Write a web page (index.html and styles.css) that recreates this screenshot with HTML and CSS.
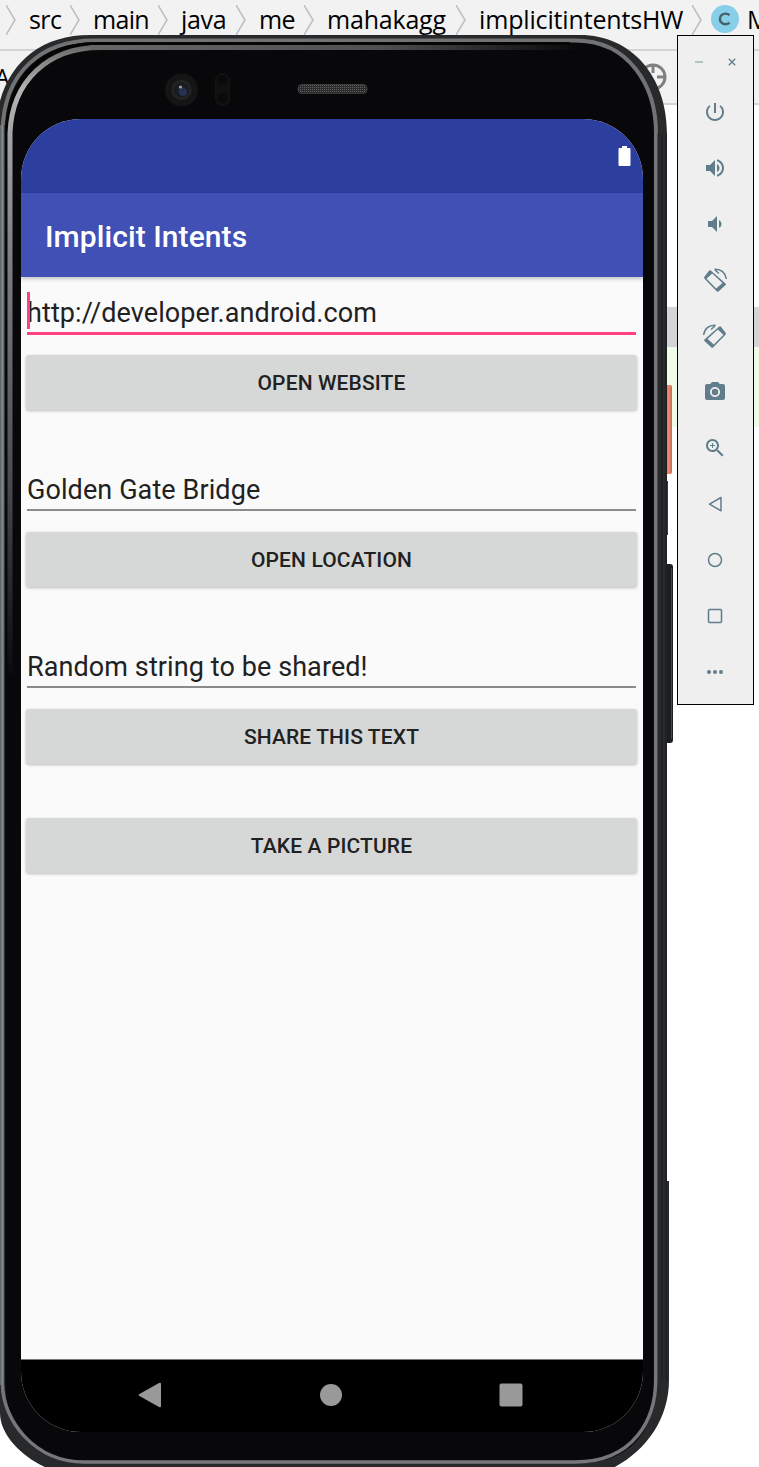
FILE: index.html
```html
<!DOCTYPE html>
<html lang="en">
<head>
<meta charset="utf-8">
<title>Implicit Intents</title>
<link rel="stylesheet" href="styles.css">
</head>
<body>
<div class="ide">
  <nav class="crumbs">
    <svg class="sep" viewBox="0 0 10 30"><path d="M0 0L9 15L0 30"/></svg><span class="crumb src">src</span>
    <svg class="sep" viewBox="0 0 10 30"><path d="M0 0L9 15L0 30"/></svg><span class="crumb main">main</span>
    <svg class="sep" viewBox="0 0 10 30"><path d="M0 0L9 15L0 30"/></svg><span class="crumb java">java</span>
    <svg class="sep" viewBox="0 0 10 30"><path d="M0 0L9 15L0 30"/></svg><span class="crumb me">me</span>
    <svg class="sep" viewBox="0 0 10 30"><path d="M0 0L9 15L0 30"/></svg><span class="crumb maha">mahakagg</span>
    <svg class="sep" viewBox="0 0 10 30"><path d="M0 0L9 15L0 30"/></svg><span class="crumb impl">implicitintentsHW</span>
    <svg class="sep" viewBox="0 0 10 30"><path d="M0 0L9 15L0 30"/></svg><span class="class-badge"><svg viewBox="0 0 28 28"><path d="M18.500 10.200A5.600 5.300 0 1 0 18.500 17.600"/></svg></span><span class="crumb">M</span>
  </nav>
  <div class="tools"><span class="tab">A</span>
    <svg class="target" viewBox="0 0 28 28"><circle cx="14" cy="14" r="12"/><path d="M14 1v9M14 18v9M1 14h9M18 14h9"/></svg>
  </div>
  <div class="editor"><div class="row-gray"></div><div class="row-green"></div></div>
</div>

<div class="phone">
  <svg class="frame" viewBox="0 0 676 1432">
    <defs>
      <linearGradient id="edgeLeft" x1="0" x2="1" y1="0" y2="0"><stop offset="0" stop-color="#5b6063"/><stop offset=".5" stop-color="#85898c"/><stop offset=".8" stop-color="#5b6063"/><stop offset="1" stop-color="#111"/></linearGradient>
      <linearGradient id="shineLeft" gradientUnits="userSpaceOnUse" x1="0" x2="0" y1="10" y2="640"><stop offset="0" stop-color="#686868"/><stop offset=".07" stop-color="#b4b4b4"/><stop offset=".3" stop-color="#858585"/><stop offset=".7" stop-color="#4a4a4a"/><stop offset="1" stop-color="#0b0a0b"/></linearGradient>
      <linearGradient id="shineTop" gradientUnits="userSpaceOnUse" x1="80" x2="580" y1="0" y2="0"><stop offset="0" stop-color="#686868"/><stop offset=".6" stop-color="#505050"/><stop offset="1" stop-color="#08080a"/></linearGradient>
      <linearGradient id="key" x1="0" x2="1" y1="0" y2="0"><stop offset="0" stop-color="#c85d46"/><stop offset=".5" stop-color="#f08a70"/><stop offset="1" stop-color="#c96852"/></linearGradient>
      <pattern id="mesh" width="2" height="2" patternUnits="userSpaceOnUse"><rect width="2" height="2" fill="#2b2b2b"/><rect width="1" height="1" fill="#606060"/></pattern>
      <radialGradient id="lens"><stop offset="0" stop-color="#20283e"/><stop offset=".6" stop-color="#17191f"/><stop offset="1" stop-color="#292929"/></radialGradient>
    </defs>
    <rect x="665" y="350" width="7" height="89" rx="2" fill="url(#key)"/>
    <rect x="665" y="446" width="3" height="54" fill="#3a3a3a"/>
    <rect x="664" y="529" width="9" height="179" rx="3" fill="#1d1e1e"/>
    <path d="M671.500 533V704" stroke="#484848"/>
    <path d="M0 66C12 24 44 0 90 0H580C632 0 667 42 667 98V1146H669V1345C669 1384 646 1416 613 1433H47C22 1422 0 1400 0 1378Z" fill="#27292a"/>
    <path d="M5 94C7 34 48 5 100 5H575C632 5 656 48 656 98V1345C656 1396 630 1428 580 1428H84C35 1428 5 1395 5 1345Z" fill="#08080a"/>
    <path d="M2.500 98C3 35 44 5.500 94 5.500H575C630 5.500 656 52 656 98" fill="none" stroke="#717274" stroke-width="4"/>
    <path d="M7 100C9 38 48 8.500 96 8.500H570" fill="none" stroke="#050505" stroke-width="3"/>
    <rect x="0" y="90" width="5" height="1260" fill="url(#edgeLeft)"/>
    <path d="M10 640V98C12 46 48 12.500 100 12.500" fill="none" stroke="url(#shineLeft)" stroke-width="5"/>
    <rect x="90" y="10" width="490" height="5" fill="url(#shineTop)"/>
    <path d="M655.700 98V1345C655.700 1384 634 1427 575 1427H84C34 1427 3 1385 2.500 1350" fill="none" stroke="#777678" stroke-width="3.500"/>
    <path d="M662 100V1345M666 100V1345" stroke="#1b1c1d"/>
    <circle cx="181.500" cy="55" r="16.500" fill="#151515"/><circle cx="181.500" cy="55" r="10" fill="url(#lens)"/><circle cx="183" cy="57" r="4" fill="#26304f"/><circle cx="180.500" cy="52" r="1.600" fill="#9c9c9c"/>
    <rect x="215.500" y="38.500" width="14" height="32" rx="7" fill="#101011" stroke="#151516"/><circle cx="222.500" cy="45" r="5" fill="#0a0a0b"/><circle cx="222.500" cy="63" r="5" fill="#0a0a0b"/>
    <rect x="298" y="49.500" width="69" height="9" rx="4" fill="url(#mesh)" stroke="#3a3a3a"/>
  </svg>
  <main class="screen">
    <header class="status"><svg class="battery" viewBox="0 0 12 20"><path d="M1 2H3.500V0H8.500V2H11Q12 2 12 3V19Q12 20 11 20H1Q0 20 0 19V3Q0 2 1 2Z"/></svg></header>
    <h1 class="appbar">Implicit Intents</h1>
    <section class="content">
      <div class="field active"><i class="caret"></i>http://developer.android.com</div>
      <button class="btn">OPEN WEBSITE</button>
      <div class="field">Golden Gate Bridge</div>
      <button class="btn">OPEN LOCATION</button>
      <div class="field">Random string to be shared!</div>
      <button class="btn">SHARE THIS TEXT</button>
      <button class="btn solo">TAKE A PICTURE</button>
    </section>
    <footer class="navbar">
      <svg viewBox="0 0 24 26"><path d="M1 12.200L21 1Q23 0 23 2V24Q23 26 21 25L1 13.800Q0 13 1 12.200Z"/></svg>
      <svg viewBox="0 0 24 26"><circle cx="12" cy="13" r="11"/></svg>
      <svg viewBox="0 0 24 26"><rect x=".500" y="1.500" width="23" height="23" rx="2"/></svg>
    </footer>
  </main>
</div>

<aside class="controls">
  <div class="window-btns">
    <svg viewBox="0 0 8 8"><path d="M0 4H8" stroke="#9fb0b8" stroke-width="1.500"/></svg>
    <svg viewBox="0 0 8 8"><path d="M.800.800L7.200 7.200M7.200.800L.800 7.200" stroke="#607d8b" stroke-width="1.300"/></svg>
  </div>
  <svg class="ico" viewBox="0 0 24 24"><path d="M13 3h-2v10h2V3zm4.830 2.170l-1.420 1.420C17.990 7.860 19 9.810 19 12c0 3.870-3.130 7-7 7s-7-3.130-7-7c0-2.190 1.010-4.140 2.580-5.420L6.170 5.170C4.230 6.820 3 9.260 3 12c0 4.970 4.030 9 9 9s9-4.030 9-9c0-2.740-1.230-5.180-3.170-6.830z"/></svg>
  <svg class="ico" viewBox="0 0 24 24"><path d="M3 9v6h4l5 5V4L7 9H3zm13.500 3c0-1.770-1.020-3.290-2.500-4.030v8.050c1.480-.730 2.500-2.250 2.500-4.020zM14 3.230v2.060c2.890.860 5 3.540 5 6.710s-2.110 5.850-5 6.710v2.060c4.010-.910 7-4.490 7-8.770s-2.990-7.860-7-8.770z"/></svg>
  <svg class="ico" viewBox="0 0 24 24"><path d="M18.500 12c0-1.770-1.020-3.290-2.500-4.030v8.050c1.480-.730 2.500-2.250 2.500-4.020zM5 9v6h4l5 5V4L9 9H5z"/></svg>
  <svg class="ico" viewBox="-12 -12 24 24"><path fill-rule="evenodd" d="M-5.800-9.500Q-5-10.200-4.200-9.500L10.600 3.400Q11.200 4.200 10.600 5L3.500 11.500Q2.700 12.200 1.900 11.500L-10.700-1.500Q-11.300-2.400-10.600-3.200ZM-2.800-6.500L-8.400-1.300L1.200 8.600L7.400 3Z"/><path class="line" d="M-.500-10.800C6-11.300 10.600-7 11.400-1M0-10L4-6.500"/></svg>
  <svg class="ico" viewBox="-12 -12 24 24"><g transform="scale(-1 1)"><path fill-rule="evenodd" d="M-5.800-9.500Q-5-10.200-4.200-9.500L10.600 3.400Q11.200 4.200 10.600 5L3.500 11.500Q2.700 12.200 1.900 11.500L-10.700-1.500Q-11.300-2.400-10.600-3.200ZM-2.800-6.500L-8.400-1.300L1.200 8.600L7.400 3Z"/><path class="line" d="M-.500-10.800C6-11.300 10.600-7 11.400-1M0-10L4-6.500"/></g></svg>
  <svg class="ico" viewBox="0 0 24 24"><circle cx="12" cy="12" r="3.200"/><path d="M9 2L7.170 4H4c-1.100 0-2 .9-2 2v12c0 1.100.9 2 2 2h16c1.100 0 2-.9 2-2V6c0-1.100-.9-2-2-2h-3.170L15 2H9zm3 15c-2.760 0-5-2.240-5-5s2.240-5 5-5 5 2.240 5 5-2.240 5-5 5z"/></svg>
  <svg class="ico" viewBox="0 0 24 24"><path d="M15.500 14h-.79l-.28-.27C15.410 12.590 16 11.110 16 9.500 16 5.910 13.090 3 9.500 3S3 5.910 3 9.500 5.910 16 9.500 16c1.610 0 3.090-.59 4.230-1.570l.27.28v.79l5 4.990L20.490 19l-4.990-5zm-6 0C7.010 14 5 11.990 5 9.500S7.010 5 9.500 5 14 7.010 14 9.500 11.990 14 9.500 14zM12 10h-2v2H9v-2H7V9h2V7h1v2h2v1z"/></svg>
  <svg class="ico" viewBox="0 0 24 24"><path class="line" d="M18 5.500V18.800L6.500 12.100Z"/></svg>
  <svg class="ico" viewBox="0 0 24 24"><circle class="line" cx="12" cy="12" r="6.500"/></svg>
  <svg class="ico" viewBox="0 0 24 24"><rect class="line" x="5.500" y="5.500" width="13" height="13" rx="1"/></svg>
  <svg class="ico" viewBox="0 0 24 24"><circle cx="6" cy="12" r="2"/><circle cx="12" cy="12" r="2"/><circle cx="18" cy="12" r="2"/></svg>
</aside>
</body>
</html>
```
FILE: styles.css
```css
* { box-sizing: border-box; }
body { margin: 0; position: relative; width: 759px; height: 1467px; overflow: hidden; background: #fff; }
svg { display: block; flex: none; }

.ide { font-family: "Open Sans", "Noto Sans", sans-serif; color: #000; }
.crumbs { display: flex; height: 51px; padding: 5px 0 0 6px; background: #f2f2f2; border-bottom: 2px solid #d4d4d4; overflow: hidden; }
.sep { width: 10px; height: 30px; fill: none; stroke: #b9bfc2; stroke-width: 1.500; }
.crumb { flex: none; margin-top: -1px; font-size: 25px; line-height: 30px; letter-spacing: -.15px; white-space: nowrap; }
.src { width: 54px; padding-left: 13px; letter-spacing: -.6px; }
.main { width: 78px; padding-left: 13px; letter-spacing: -.7px; }
.java { width: 68px; padding-left: 13px; letter-spacing: -.3px; }
.me { width: 58px; padding-left: 13px; letter-spacing: -.6px; }
.maha { width: 142px; padding-left: 13px; letter-spacing: -.2px; }
.impl { width: 226px; padding-left: 13px; letter-spacing: -.15px; }
.class-badge { flex: none; width: 28px; height: 28px; margin: 0 8px 0 9px; border-radius: 50%; background: #87cee8; }
.class-badge svg { fill: none; stroke: #46606b; stroke-width: 2.400; }
.tools { display: flex; justify-content: space-between; height: 54px; padding: 12px 92px 0 0; background: #f2f2f2; border-bottom: 2px solid #d4d4d4; }
.tab { margin-left: -5px; font-size: 23px; line-height: 28px; }
.target { width: 28px; height: 28px; fill: none; stroke: #808080; stroke-width: 3; }
.editor { padding-top: 202px; }
.row-gray { height: 40px; background: #d4d4d4; }
.row-green { height: 80px; background: #edfbe7; }

.phone { position: absolute; left: 0; top: 35px; width: 676px; height: 1432px; padding: 84px 0 0 21px; }
.frame { position: absolute; left: 0; top: 0; width: 676px; height: 1432px; }
.screen { position: relative; display: flex; flex-direction: column; width: 622px; height: 1313px; border-radius: 60px; overflow: hidden; background: #fafafa; font-family: Roboto, sans-serif; color: #212121; }
.status { display: flex; justify-content: flex-end; height: 74px; padding: 27px 12px 0 0; background: #2c3e9e; }
.battery { width: 13px; height: 20px; fill: #fff; }
.appbar { height: 84px; margin: 0; padding-left: 24px; background: #4050b5; color: #fff; font-size: 30px; font-weight: 500; line-height: 88px; letter-spacing: .08px; box-shadow: 0 2px 4px rgba(0,0,0,.22); }
.content { flex: 1; padding: 15px 6px 0 5px; }
.field { position: relative; height: 42px; margin: 0 1px 21px; border-bottom: 2px solid #8b8b8b; font-size: 27px; line-height: 42px; letter-spacing: .09px; white-space: nowrap; }
.active { height: 43px; margin-bottom: 20px; border-bottom: 3px solid #ff4081; }
.caret { position: absolute; left: 0; top: 0; width: 3px; height: 37px; background: #ff4081; }
.btn { display: block; width: 611px; height: 55px; margin: 0 0 59px; padding: 1px 0 0; border: 0; border-radius: 3px; background: #d6d8d7; box-shadow: 0 1px 3px rgba(0,0,0,.25); color: #212121; font: 500 21px/54px Roboto, sans-serif; letter-spacing: .12px; }
.solo { margin-top: -5px; }
.navbar { display: flex; justify-content: space-between; height: 73px; padding: 22px 120px 0 117px; background: #000; border-top: 1px solid #777; }
.navbar svg { width: 24px; height: 26px; fill: #999; }

.controls { position: absolute; left: 677px; top: 35px; display: flex; flex-direction: column; align-items: center; gap: 32px; width: 77px; height: 670px; padding: 22px 2px 0 0; border: 1px solid #000; background: #efefef; }
.window-btns { display: flex; gap: 25px; height: 8px; margin: 0 -2px 2px 0; }
.window-btns svg { width: 8px; height: 8px; }
.ico { width: 24px; height: 24px; fill: #607d8b; overflow: visible; }
.line { fill: none; stroke: #607d8b; stroke-width: 1.500; stroke-linejoin: round; }
```
